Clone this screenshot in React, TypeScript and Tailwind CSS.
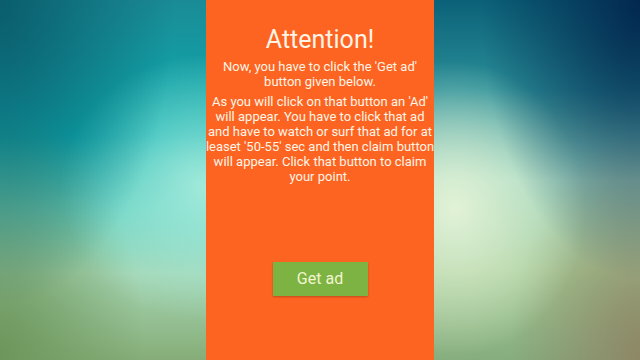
import React from 'react';

const App: React.FC = () => {
  return (
    <div className="flex w-[640px] h-[360px] overflow-hidden font-['Roboto',sans-serif]">
      {/* blurred wallpaper, left */}
      <div className="w-[206px] h-full bg-[radial-gradient(ellipse_at_0%_0%,#0a5d6c_0%,transparent_60%),radial-gradient(ellipse_at_100%_52%,#a2eadb_0%,transparent_50%),radial-gradient(ellipse_at_0%_100%,#6d965c_0%,transparent_50%),linear-gradient(to_bottom,#1a8b96_0%,#0db0b2_38%,#62d0c0_58%,#a6d6b4_76%,#86ad78_100%)]" />

      {/* main card */}
      <div className="w-[228px] h-full bg-[#fd6421] flex flex-col items-center text-[#fff4e6]">
        <h1 className="mt-[25px] text-[25px] leading-[29px] font-normal">Attention!</h1>
        <p className="mt-[5px] text-[13px] leading-[15px] text-center whitespace-nowrap">
          Now, you have to click the 'Get ad'
          <br />
          button given below.
        </p>
        <p className="mt-[5px] text-[13px] leading-[15px] text-center whitespace-nowrap">
          As you will click on that button an 'Ad'
          <br />
          will appear. You have to click that ad
          <br />
          and have to watch or surf that ad for at
          <br />
          leaset '50-55' sec and then claim button
          <br />
          will appear. Click that button to claim
          <br />
          your point.
        </p>
        <button className="mt-[78px] w-[95px] h-[34px] bg-[#7cb342] text-[16px] text-[#f3f5cf] shadow-[0_1px_2px_rgba(0,0,0,0.25)]">
          Get ad
        </button>
      </div>

      {/* blurred wallpaper, right */}
      <div className="w-[206px] h-full bg-[radial-gradient(ellipse_at_100%_0%,#03284f_0%,transparent_55%),radial-gradient(ellipse_at_10%_58%,#e2f2d6_0%,transparent_50%),radial-gradient(ellipse_at_100%_100%,#8e8766_0%,transparent_45%),linear-gradient(to_bottom,#0b6178_0%,#2a8f98_25%,#9ed6c0_50%,#a6cc98_75%,#86ad7e_100%)]" />
    </div>
  );
};

export default App;
